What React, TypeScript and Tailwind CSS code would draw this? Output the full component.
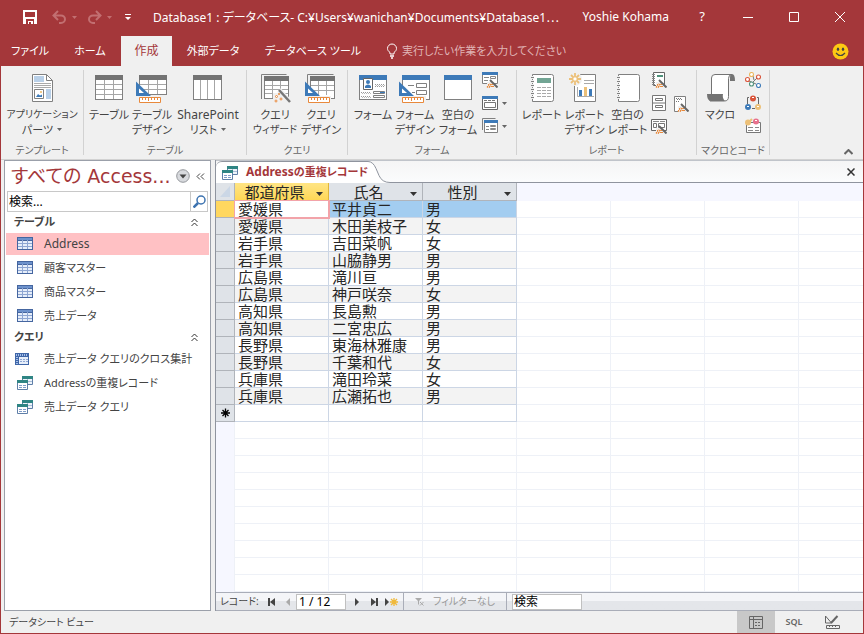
import type { ReactNode } from 'react'

interface Person {
  pref: string
  name: string
  sex: string
}

const PEOPLE: Person[] = [
  { pref: '愛媛県', name: '平井貞二', sex: '男' },
  { pref: '愛媛県', name: '木田美枝子', sex: '女' },
  { pref: '岩手県', name: '吉田菜帆', sex: '女' },
  { pref: '岩手県', name: '山脇静男', sex: '男' },
  { pref: '広島県', name: '滝川亘', sex: '男' },
  { pref: '広島県', name: '神戸咲奈', sex: '女' },
  { pref: '高知県', name: '長島勲', sex: '男' },
  { pref: '高知県', name: '二宮忠広', sex: '男' },
  { pref: '長野県', name: '東海林雅康', sex: '男' },
  { pref: '長野県', name: '千葉和代', sex: '女' },
  { pref: '兵庫県', name: '滝田玲菜', sex: '女' },
  { pref: '兵庫県', name: '広瀬拓也', sex: '男' },
]

const COLUMNS = ['都道府県', '氏名', '性別']

export default function App() {
  return (
    <div className="flex h-screen flex-col overflow-hidden border-x border-b border-[#a4373a] bg-[#f0f0f0] font-['Noto_Sans','Noto_Sans_CJK_JP',sans-serif] text-[11px] text-[#444] [font-feature-settings:'palt']">
      <TitleBar />
      <RibbonTabs />
      <Ribbon />
      <div className="flex min-h-0 flex-1">
        <NavPane />
        <Document />
      </div>
      <StatusBar />
    </div>
  )
}

function TitleBar() {
  return (
    <header className="flex h-9 shrink-0 items-center bg-[#a4373a] pb-[2px] text-xs text-white">
      <button type="button" aria-label="上書き保存" className="ml-[22px]">
        <svg width="14" height="14" shapeRendering="crispEdges">
          <path d="M0 0h14v14H0z" fill="#fff" />
          <path d="M2 2h10v5H2zM3 9h8v5H3z" fill="#a4373a" />
          <path d="M5 11h2v3H5z" fill="#fff" />
          <path d="M7 11h3v3H7z" fill="#fff" />
          <path d="M6 12h2v2H6z" fill="#a4373a" />
        </svg>
      </button>
      <button type="button" aria-label="元に戻す" className="ml-[15px] flex items-center gap-[5px]">
        <svg width="15" height="14" fill="none" stroke="#c26f71" strokeWidth="2">
          <path d="M6 1L1.500 5.500L6 10M2 5.500h7a4 3.700 0 0 1 0 7.400H7" />
        </svg>
        <Caret className="text-[#c26f71]" />
      </button>
      <button type="button" aria-label="やり直し" className="ml-[10px] flex items-center gap-[5px]">
        <svg width="15" height="14" fill="none" stroke="#c26f71" strokeWidth="2">
          <path d="M9 1l4.500 4.500L9 10M13 5.500H6a4 3.700 0 0 0 0 7.400h2" />
        </svg>
        <Caret className="text-[#c26f71]" />
      </button>
      <button type="button" aria-label="クイック アクセス" className="ml-[13px]">
        <svg width="6" height="7" fill="#fff">
          <path d="M0 0h6v1H0zM0 3h6L3 6z" />
        </svg>
      </button>
      <h1 className="ml-[22px] min-w-0 flex-1 overflow-hidden whitespace-nowrap">
        Database1 : データベース- C:¥Users¥wanichan¥Documents¥Database1
        <span className="font-['Noto_Sans_CJK_JP'] [font-feature-settings:normal]">⋯</span>
      </h1>
      <span className="mr-[10px]">Yoshie Kohama</span>
      <button type="button" className="w-[46px] text-[13px]">?</button>
      <button type="button" aria-label="最小化" className="flex w-[46px] justify-center">
        <svg width="10" height="10"><path d="M0 5h10v1H0z" fill="#fff" /></svg>
      </button>
      <button type="button" aria-label="最大化" className="flex w-[46px] justify-center">
        <svg width="10" height="10"><path d="M.5.5h9v9h-9z" fill="none" stroke="#fff" /></svg>
      </button>
      <button type="button" aria-label="閉じる" className="flex w-[46px] justify-center">
        <svg width="10" height="10"><path d="M0 0l10 10M10 0L0 10" stroke="#fff" /></svg>
      </button>
    </header>
  )
}

function RibbonTabs() {
  return (
    <nav className="flex h-[30px] shrink-0 items-stretch bg-[#a4373a] text-white">
      <button type="button" className="w-[58px]">ファイル</button>
      <button type="button" className="w-[62px]">ホーム</button>
      <button type="button" className="w-[51px] bg-[#f0f0f0] text-xs text-[#a4373a]">作成</button>
      <button type="button" className="w-[82px]">外部データ</button>
      <button type="button" className="w-[118px]">データベース ツール</button>
      <label className="ml-[14px] flex flex-1 items-center gap-1">
        <svg width="12" height="16" fill="none" stroke="#fff" aria-hidden="true">
          <path d="M4 11V9.500C2.500 8.500 1.500 7 1.500 5.500a4.500 4.500 0 0 1 9 0C10.500 7 9.500 8.500 8 9.500V11z" />
          <path d="M4 13h4M5 15h2" strokeWidth="1.500" />
        </svg>
        <input
          type="text"
          aria-label="操作アシスト"
          placeholder="実行したい作業を入力してください"
          className="w-[200px] bg-transparent text-[11px] outline-none placeholder:text-[#e0b4b5]"
        />
      </label>
      <button type="button" aria-label="フィードバック" className="mr-[14px] self-center">
        <svg width="17" height="17">
          <circle cx="8.500" cy="8.500" r="8" fill="#fdc913" />
          <ellipse cx="6" cy="6.300" rx="1.200" ry="1.700" fill="#444" />
          <ellipse cx="11" cy="6.300" rx="1.200" ry="1.700" fill="#444" />
          <path d="M4 10q4.500 5 9 0" fill="none" stroke="#444" strokeWidth="1.200" />
        </svg>
      </button>
    </nav>
  )
}

function Ribbon() {
  return (
    <div className="flex h-[94px] shrink-0 border-b border-[#d2d2d2] pt-1 pb-1">
      <RibbonGroup label="テンプレート" className="w-[83px]">
        <BigButton icon={<AppPartsIcon />} lines={['アプリケーション', 'パーツ']} caret className="w-[76px]" />
      </RibbonGroup>
      <RibbonGroup label="テーブル" className="w-[163px]">
        <BigButton icon={<TableIcon />} lines={['テーブル']} className="w-[42px]" />
        <BigButton icon={<TableDesignIcon />} lines={['テーブル', 'デザイン']} className="w-[44px]" />
        <BigButton icon={<SharePointIcon />} lines={['SharePoint', 'リスト']} caret className="w-[68px]" />
      </RibbonGroup>
      <RibbonGroup label="クエリ" className="w-[101px]">
        <BigButton icon={<QueryWizardIcon />} lines={['クエリ', 'ウィザード']} className="w-[48px]" />
        <BigButton icon={<QueryDesignIcon />} lines={['クエリ', 'デザイン']} className="w-[44px]" />
      </RibbonGroup>
      <RibbonGroup label="フォーム" className="w-[169px]">
        <BigButton icon={<FormIcon />} lines={['フォーム']} className="w-[42px]" />
        <BigButton icon={<FormDesignIcon />} lines={['フォーム', 'デザイン']} className="w-[42px]" />
        <BigButton icon={<BlankFormIcon />} lines={['空白の', 'フォーム']} className="w-[44px]" />
        <SmallColumn className="w-[32px] pl-[2px]">
          <SmallButton name="フォーム ウィザード" icon={<FormWizardIcon />} />
          <SmallButton name="ナビゲーション" icon={<NavFormIcon />} caret />
          <SmallButton name="その他のフォーム" icon={<MoreFormsIcon />} caret />
        </SmallColumn>
      </RibbonGroup>
      <RibbonGroup label="レポート" className="w-[180px]">
        <BigButton icon={<ReportIcon />} lines={['レポート']} className="w-[42px]" />
        <BigButton icon={<ReportDesignIcon />} lines={['レポート', 'デザイン']} className="w-[44px]" />
        <BigButton icon={<BlankReportIcon />} lines={['空白の', 'レポート']} className="w-[42px]" />
        <SmallColumn className="w-[24px] pl-[2px]">
          <SmallButton name="レポート ウィザード" icon={<ReportWizardIcon />} />
          <SmallButton name="宛名ラベル" icon={<LabelsIcon />} />
          <SmallButton name="伝票ウィザード" icon={<SlipWizardIcon />} />
        </SmallColumn>
        <SmallColumn className="w-[20px] justify-center">
          <SmallButton name="はがきウィザード" icon={<PostcardIcon />} />
        </SmallColumn>
      </RibbonGroup>
      <RibbonGroup label="マクロとコード" className="w-[73px]">
        <BigButton icon={<MacroIcon />} lines={['マクロ']} className="w-[42px]" />
        <SmallColumn className="w-[26px] pl-[4px]">
          <SmallButton name="標準モジュール" icon={<ModuleIcon />} />
          <SmallButton name="クラス モジュール" icon={<ClassModuleIcon />} />
          <SmallButton name="Visual Basic" icon={<VisualBasicIcon />} />
        </SmallColumn>
      </RibbonGroup>
      <button type="button" aria-label="リボンを折りたたむ" className="mr-[10px] ml-auto self-end">
        <svg width="9" height="6" fill="none" stroke="#666" strokeWidth="2"><path d="M.5 5l4-4 4 4" /></svg>
      </button>
    </div>
  )
}

function RibbonGroup({ label, className, children }: { label: string; className: string; children: ReactNode }) {
  return (
    <section className={`flex shrink-0 flex-col border-r border-[#d2d2d2] ${className}`}>
      <div className="flex h-[72px] shrink-0 justify-center">{children}</div>
      <div className="text-center text-[10px] leading-4 whitespace-nowrap text-[#666]">{label}</div>
    </section>
  )
}

interface BigButtonProps {
  icon: ReactNode
  lines: string[]
  caret?: boolean
  className: string
}

function BigButton({ icon, lines, caret, className }: BigButtonProps) {
  return (
    <button type="button" className={`flex shrink-0 flex-col items-center pt-[3px] ${className}`}>
      {icon}
      <span className="mt-1 flex flex-col items-center leading-[15px] whitespace-nowrap">
        {lines.map((line, i) => (
          <span key={line} className={`flex items-center gap-1 ${lineSize(line)}`}>
            {line}
            {caret && i === lines.length - 1 && <Caret />}
          </span>
        ))}
      </span>
    </button>
  )
}

// long kana labels drop a size so they stay inside their button
function lineSize(line: string) {
  if (/^[A-Za-z]/.test(line)) return 'text-xs leading-[15px]'
  return line.length > 4 ? 'text-[10px]' : 'text-[11px]'
}

function SmallColumn({ className, children }: { className: string; children: ReactNode }) {
  return <div className={`flex h-[66px] shrink-0 flex-col gap-[7px] pt-[2px] ${className}`}>{children}</div>
}

function SmallButton({ name, icon, caret }: { name: string; icon: ReactNode; caret?: boolean }) {
  return (
    <button type="button" aria-label={name} className="flex items-center gap-1">
      {icon}
      {caret && <Caret />}
    </button>
  )
}

function Caret({ className = 'text-[#666]' }: { className?: string }) {
  return (
    <svg width="5" height="3" className={`shrink-0 ${className}`} fill="currentColor" aria-hidden="true">
      <path d="M0 0h5L2.500 3z" />
    </svg>
  )
}

/* ---- large ribbon icons ---- */

function Big({ children }: { children: ReactNode }) {
  return <svg width="32" height="30" viewBox="0 0 32 30" className="shrink-0" aria-hidden="true">{children}</svg>
}

function Sheet({ x, y, w, h, head = '#737373' }: { x: number; y: number; w: number; h: number; head?: string }) {
  return (
    <g shapeRendering="crispEdges">
      <rect x={x} y={y} width={w} height={h} fill="#808080" />
      <rect x={x + 1} y={y + 1} width={w - 2} height={h - 2} fill="#fff" />
      <rect x={x} y={y} width={w} height={5} fill={head} />
    </g>
  )
}

function SetSquare() {
  return (
    <g>
      <path d="M0 8.500V23h15z" fill="#3d7ab8" />
      <path d="M3 15.500V20h5z" fill="#fff" />
      <path d="M3.500 24.500h21v5h-21z" fill="#fff" stroke="#e8893c" />
      <path d="M6.500 25v2M9.500 25v2M12.500 25v3M15.500 25v2M18.500 25v2M21.500 25v2" stroke="#e8893c" />
    </g>
  )
}

function AppPartsIcon() {
  return (
    <Big>
      <path d="M6.500 1.500h14l6 6v21h-20z" fill="#fff" stroke="#808080" />
      <path d="M20.500 1.500v6h6" fill="none" stroke="#808080" />
      <path d="M8 3h10v6H8zM20 16h5v10h-5z" fill="#b9d0e8" />
      <path d="M8 10.500h17M8 12.500h17M8 14.500h17" stroke="#aaa" />
      <path d="M8.500 16.500h9v9h-9z" fill="#fff" stroke="#808080" />
      <path d="M10 24l2-3 2 1.500 2-1v2.500z" fill="#3d7ab8" />
      <circle cx="15" cy="19" r="1" fill="#ecb75f" />
    </Big>
  )
}

function TableIcon() {
  return (
    <Big>
      <Sheet x={2} y={2} w={28} h={25} />
      <path d="M3 11.500h26M3 16.500h26M3 21.500h26M11.500 7v19M20.500 7v19" stroke="#a6a6a6" />
    </Big>
  )
}

function TableDesignIcon() {
  return (
    <Big>
      <Sheet x={3} y={2} w={28} h={20} />
      <path d="M4 11.500h26M4 16.500h26M12.500 7v14M21.500 7v14" stroke="#a6a6a6" />
      <SetSquare />
    </Big>
  )
}

function SharePointIcon() {
  return (
    <Big>
      <Sheet x={1} y={2} w={29} h={25} />
      <path d="M8.500 7v19M15.500 7v19M22.500 7v19" stroke="#a6a6a6" />
    </Big>
  )
}

function QueryWizardIcon() {
  return (
    <Big>
      <path d="M2.500 26V1.500h25" fill="none" stroke="#808080" />
      <Sheet x={5} y={3} w={25} h={23} />
      <path d="M6 12.500h23M6 16.500h23M6 20.500h23M13.500 8v17M21.500 8v17" stroke="#a6a6a6" />
      <path d="M14 20h9l9 10H14z" fill="#f0f0f0" />
      <path d="M20 17l11 12" stroke="#f0f0f0" strokeWidth="5" />
      <path d="M20 17l11 12" stroke="#777" strokeWidth="2.500" />
      <g fill="#fff" stroke="#e8893c">
        <circle cx="17.500" cy="23.500" r="1" />
        <circle cx="22" cy="26" r="1" />
        <circle cx="17" cy="28" r="1" />
        <circle cx="20" cy="21" r=".7" />
      </g>
    </Big>
  )
}

function QueryDesignIcon() {
  return (
    <Big>
      <path d="M2.500 20V1.500h26" fill="none" stroke="#808080" />
      <Sheet x={5} y={3} w={25} h={23} />
      <path d="M6 12.500h23M6 17.500h23M13.500 8v14M21.500 8v14" stroke="#a6a6a6" />
      <path d="M0 23h26v7H0z" fill="#f0f0f0" />
      <SetSquare />
    </Big>
  )
}

function FormIcon() {
  return (
    <Big>
      <Sheet x={2} y={2} w={28} h={25} head="#3d7ab8" />
      <path d="M6.500 5.500h9v11h-9z" fill="#fff" stroke="#666" />
      <circle cx="11" cy="9" r="2" fill="#3d7ab8" />
      <path d="M8 15v-2q3-3 6 0v2z" fill="#3d7ab8" />
      <path d="M18 11.500h10M18 13.500h10M4 19.500h10M4 23.500h10" stroke="#999" strokeDasharray="1 1" />
      <path d="M19 12.500h9M5 20.500h9M5 24.500h9" stroke="#bbb" strokeDasharray="1 1" />
      <path d="M16.500 18.500h11v2h-11zM16.500 22.500h11v2h-11z" fill="#fff" stroke="#808080" />
      <path d="M23 19h5v1h-5z" fill="#3d7ab8" />
    </Big>
  )
}

function FormDesignIcon() {
  return (
    <Big>
      <Sheet x={3} y={2} w={28} h={25} head="#3d7ab8" />
      <path d="M9 12.500h6M13 19.500h3" stroke="#808080" />
      <path d="M17.500 10.500h10v4h-10zM17.500 17.500h10v4h-10z" fill="#fff" stroke="#808080" />
      <path d="M0 23h27v7H0z" fill="#f0f0f0" />
      <SetSquare />
    </Big>
  )
}

function BlankFormIcon() {
  return <Big><Sheet x={2} y={2} w={28} h={25} head="#3d7ab8" /></Big>
}

function Notebook() {
  return (
    <g>
      <path d="M6.500 1.500h19q2 0 2 2v23q0 2-2 2h-19z" fill="#fff" stroke="#808080" />
      <path d="M5 4.500h3M5 8.500h3M5 12.500h3M5 16.500h3M5 20.500h3M5 24.500h3" stroke="#f0f0f0" strokeWidth="3" />
      <path d="M5 4.500h3M5 8.500h3M5 12.500h3M5 16.500h3M5 20.500h3M5 24.500h3" stroke="#808080" />
    </g>
  )
}

function ReportIcon() {
  return (
    <Big>
      <Notebook />
      <path d="M11 5h14v5H11z" fill="#72a594" />
      <path d="M11 14.500h14M11 17.500h14M11 20.500h14M11 23.500h14" stroke="#aaa" strokeDasharray="4 1" />
    </Big>
  )
}

function BlankReportIcon() {
  return <Big><Notebook /></Big>
}

function ReportDesignIcon() {
  return (
    <Big>
      <path d="M5.500 1.500h21v27h-21z" fill="#fff" stroke="#808080" />
      <path d="M15 7.500h10M15 10.500h10" stroke="#aaa" />
      <path d="M8.500 14v9.500H25" fill="none" stroke="#aaa" />
      <path d="M10 17h3v6h-3zM20 16h3v7h-3z" fill="#3d7ab8" />
      <path d="M15 14h3v9h-3z" fill="#ecc078" />
      <circle cx="6" cy="6" r="7" fill="#f0f0f0" />
      <path d="M6 0v12M0 6h12M2 2l8 8M10 2l-8 8" stroke="#ecc078" strokeWidth="1.800" />
      <circle cx="6" cy="6" r="2.200" fill="#fff" stroke="#ecc078" />
    </Big>
  )
}

function MacroIcon() {
  return (
    <Big>
      <path d="M11 1.500h17q-3.500 0-3.500 4v18q0 4.500-4 4.500H6V22h1.500V5q0-3.500 3.500-3.500z" fill="#fff" stroke="#737373" />
      <path d="M28 1q3 0 3 7h-5V5q0-4 2-4zM3 21h16q-1 4 2 7H7q-4 0-4-7z" fill="#737373" />
    </Big>
  )
}

/* ---- small ribbon icons ---- */

function Small({ children }: { children: ReactNode }) {
  return <svg width="16" height="16" viewBox="0 0 16 16" className="shrink-0" aria-hidden="true">{children}</svg>
}

function Wand() {
  return (
    <g>
      <path d="M5 10h5l6 6H5z" fill="#f0f0f0" />
      <path d="M8 8l7.500 7.500" stroke="#666" strokeWidth="2" />
      <g stroke="#e8893c" strokeWidth="1.200" strokeDasharray="1 1">
        <path d="M5 15.500l4-4.500M7 16l3-4M10.500 12v4M6 12.500h6M5 14.500h7" />
      </g>
    </g>
  )
}

function FormWizardIcon() {
  return (
    <Small>
      <path d="M.5.500h15v11H.500z" fill="#fff" stroke="#808080" />
      <path d="M0 0h16v3H0z" fill="#3d7ab8" />
      <path d="M2 5.500h5M2 8.500h4" stroke="#888" />
      <path d="M8.500 4.500h5v2h-5z" fill="none" stroke="#888" />
      <Wand />
    </Small>
  )
}

function NavFormIcon() {
  return (
    <Small>
      <path d="M.5 1.500h15v13H.5z" fill="#fff" stroke="#666" />
      <path d="M0 1h16v3H0z" fill="#3d7ab8" />
      <path d="M2 5.500h12" stroke="#777" strokeDasharray="3 1" />
      <path d="M2.500 7.500h11v5h-11z" fill="#fff" stroke="#777" />
    </Small>
  )
}

function MoreFormsIcon() {
  return (
    <Small>
      <path d="M.5 12V.500h13" fill="none" stroke="#808080" />
      <path d="M2.500 2.500h13v12h-13z" fill="#fff" stroke="#808080" />
      <path d="M2 2h14v3H2z" fill="#3d7ab8" />
      <path d="M4 8.500h3M4 11.500h3" stroke="#888" />
      <path d="M8.500 7.500h5v1h-5zM8.500 10.500h5v1h-5z" fill="none" stroke="#888" />
    </Small>
  )
}

function ReportWizardIcon() {
  return (
    <Small>
      <path d="M2.500.5h11v13h-11z" fill="#fff" stroke="#666" />
      <path d="M1 2.500h3M1 4.500h3M1 6.500h3M1 8.500h3M1 10.500h3M1 12.500h3" stroke="#888" />
      <path d="M6 3h6v2H6z" fill="#4f927b" />
      <Wand />
    </Small>
  )
}

function LabelsIcon() {
  return (
    <Small>
      <path d="M1.500.5h13v15h-13z" fill="#fff" stroke="#777" />
      <path d="M4.500 3.500h7v2h-7zM4.500 10.500h7v2h-7zM2 8h12" fill="none" stroke="#777" />
    </Small>
  )
}

function SlipWizardIcon() {
  return (
    <Small>
      <path d="M.5 1.500h15v11H.5z" fill="#fff" stroke="#666" />
      <path d="M2 3.500h6M9 3.500h5" stroke="#888" />
      <path d="M2.500 5.500h3v4h-3zM7.500 5.500h6v4h-6z" fill="none" stroke="#777" />
      <Wand />
    </Small>
  )
}

function PostcardIcon() {
  return (
    <Small>
      <path d="M1.500.5h11v15h-11z" fill="#fff" stroke="#808080" />
      <path d="M3 2.500h6M4 3.500h5M3 5.500h3" stroke="#777" strokeDasharray="1 1" />
      <Wand />
    </Small>
  )
}

function Ball({ cx, cy, color }: { cx: number; cy: number; color: string }) {
  return <circle cx={cx} cy={cy} r="2" fill="#fff" stroke={color} strokeWidth="1.100" />
}

function ModuleIcon() {
  return (
    <Small>
      <path d="M4 9l7 3M8 4l1 4M12 6l-4 4" stroke="#777" />
      <Ball cx={2.500} cy={7.500} color="#d9543a" />
      <Ball cx={6.500} cy={2.500} color="#ecb75f" />
      <Ball cx={13.500} cy={5} color="#d9543a" />
      <Ball cx={6.500} cy={12} color="#4f927b" />
      <Ball cx={13.500} cy={13.500} color="#3d7ab8" />
    </Small>
  )
}

function ClassModuleIcon() {
  return (
    <Small>
      <path d="M4 2.500H2.500V9M12 2.500h1.500V9M7 13.500h3" fill="none" stroke="#666" />
      <circle cx="8" cy="3.500" r="3" fill="#d9543a" />
      <circle cx="3" cy="12" r="3" fill="#3d7ab8" />
      <circle cx="13" cy="12" r="3" fill="#ecc078" />
      <path d="M7 2h2v1H7zM2 11h2v1H2zM12 11h2v1h-2z" fill="#fff" />
    </Small>
  )
}

function VisualBasicIcon() {
  return (
    <Small>
      <path d="M1.500 4.500h14v10h-14z" fill="#fff" stroke="#777" />
      <path d="M3 9.500h5M10 9.500h4M3 12.500h5M10 12.500h4" stroke="#888" />
      <circle cx="3" cy="4.500" r="3" fill="#ecc078" />
      <circle cx="11" cy="3.500" r="3" fill="#e8718d" />
      <path d="M4 4l3-3" stroke="#ecc078" strokeWidth="2" />
      <path d="M10 2h2v1h-2z" fill="#fff" />
    </Small>
  )
}

/* ---- navigation pane ---- */

function NavPane() {
  return (
    <aside className="ml-[3px] flex w-[212px] shrink-0 border-r border-[#8f949e]">
      <div className="min-w-0 flex-1 border border-[#9ba0aa] bg-white px-px">
        <div className="flex h-[30px] items-center pl-[5px]">
          <h2 className="min-w-0 flex-1 font-['DejaVu_Sans','Noto_Sans_CJK_JP',sans-serif] text-[19px] leading-[30px] whitespace-nowrap text-[#a4373a]">
            すべての Access...
          </h2>
          <button type="button" aria-label="カテゴリの選択" className="mr-[6px] shrink-0">
            <svg width="14" height="14">
              <circle cx="7" cy="7" r="6.300" fill="#d8dade" stroke="#94979c" />
              <path d="M3.500 5.500h7L7 9.500z" fill="#444" />
            </svg>
          </button>
          <button type="button" aria-label="閉じる" className="mr-[4px] shrink-0">
            <svg width="9" height="7" fill="none" stroke="#444"><path d="M4 .5l-3 3 3 3M8 .5l-3 3 3 3" /></svg>
          </button>
        </div>
        <div className="mx-px flex h-[21px] border border-[#c8c8c8]">
          <input type="text" aria-label="オブジェクトの検索" defaultValue="検索..." className="min-w-0 flex-1 pl-px text-xs text-black outline-none" />
          <button type="button" aria-label="検索" className="flex w-[17px] items-center justify-center border-l border-[#c8c8c8]">
            <svg width="13" height="13" fill="none" stroke="#3d73b0">
              <circle cx="8" cy="5" r="4" strokeWidth="1.500" />
              <path d="M5 8l-4.500 4.500" strokeWidth="2.500" />
            </svg>
          </button>
        </div>
        <NavHeading>テーブル</NavHeading>
        <ul className="flex flex-col gap-[2px]">
          <NavItem icon={<NavTableIcon />} selected>Address</NavItem>
          <NavItem icon={<NavTableIcon />}>顧客マスター</NavItem>
          <NavItem icon={<NavTableIcon />}>商品マスター</NavItem>
          <NavItem icon={<NavTableIcon />}>売上データ</NavItem>
        </ul>
        <NavHeading>クエリ</NavHeading>
        <ul className="flex flex-col gap-[2px]">
          <NavItem icon={<CrosstabIcon />}>売上データ クエリのクロス集計</NavItem>
          <NavItem icon={<QueryIcon />}>Addressの重複レコード</NavItem>
          <NavItem icon={<QueryIcon />}>売上データ クエリ</NavItem>
        </ul>
      </div>
      <div className="w-1 shrink-0 bg-[#f0f0f0]" />
    </aside>
  )
}

function NavHeading({ children }: { children: string }) {
  return (
    <button type="button" className="flex h-[21px] w-full items-center justify-between pr-[11px] pl-[8px] text-[11px] font-bold">
      {children}
      <svg width="7" height="9" fill="none" stroke="#333"><path d="M.5 4l3-3 3 3M.5 8l3-3 3 3" /></svg>
    </button>
  )
}

function NavItem({ icon, selected, children }: { icon: ReactNode; selected?: boolean; children: string }) {
  return (
    <li>
      <button
        type="button"
        className={`flex h-[22px] w-full items-center gap-[11px] pl-[11px] whitespace-nowrap ${
          selected ? 'bg-[#ffc1c4] text-xs' : 'text-[11px]'
        }`}
      >
        {icon}
        {children}
      </button>
    </li>
  )
}

function NavTableIcon() {
  return (
    <Small>
      <path d="M0 1h16v13H0z" fill="#4566a0" />
      <path d="M1 5h14v8H1z" fill="#e6eefa" />
      <path d="M1 2h14v2H1z" fill="#6d92cc" />
      <path d="M1 7.500h14M1 10.500h14M5.500 4v9M10.500 4v9" stroke="#8ea6d2" />
    </Small>
  )
}

function CrosstabIcon() {
  return (
    <svg width="16" height="16" className="mr-[2px] -ml-[2px] shrink-0" aria-hidden="true">
      <path d="M0 2h14v12H0z" fill="#3f66a8" />
      <path d="M4 6h9v7H4z" fill="#e6eefa" />
      <path d="M1 4h12M2 6v7" stroke="#a6c0ea" strokeWidth="2" strokeDasharray="1 1" />
      <path d="M5 8.500h8M5 10.500h8" stroke="#8ea6d2" strokeDasharray="2 1" />
    </svg>
  )
}

function QueryIcon() {
  return (
    <Small>
      <path d="M5.500 1.500h10v8h-10z" fill="#eef4fa" stroke="#5f7fa8" />
      <path d="M5 1h11v3H5z" fill="#2f8584" />
      <path d="M10.500 4v5M6 6.500h9" stroke="#a9bdd8" />
      <path d="M.5 5.500h10v9H.5z" fill="#fff" stroke="#5f7fa8" />
      <path d="M0 5h11v3H0z" fill="#2f8584" />
      <path d="M2 10.500h3M6 10.500h3M2 12.500h3M6 12.500h3" stroke="#7f9cc8" />
    </Small>
  )
}

/* ---- datasheet ---- */

function Document() {
  return (
    <main className="flex min-w-0 flex-1 flex-col border-t border-[#c0c4ca]">
      <div className="flex h-[22px] shrink-0 items-stretch bg-linear-to-b from-[#f5f5f5] to-[#fbfcfd]">
        <div className="flex items-center gap-2 rounded-tl-md border-t border-[#8f949e] bg-white pl-[6px]">
          <QueryIcon />
          <span className="text-[11px] font-bold whitespace-nowrap text-[#a4373a]">
            <span className="text-xs">Address</span>の重複レコード
          </span>
        </div>
        <svg width="22" height="22" className="shrink-0" aria-hidden="true">
          <path d="M0 .5q5 0 8 7l3 7q3 7 11 7H0z" fill="#fff" />
          <path d="M0 .5q5 0 8 7l3 7q3 7 11 7" fill="none" stroke="#8f949e" />
        </svg>
        <div className="flex flex-1 items-center justify-end border-b border-[#8f949e] pr-[8px]">
          <button type="button" aria-label="タブを閉じる">
            <svg width="8" height="8" stroke="#333" strokeWidth="1.500"><path d="M.5.5l7 7M7.500.5l-7 7" /></svg>
          </button>
        </div>
      </div>
      <div className="flex min-h-0 flex-1 flex-col bg-white bg-[linear-gradient(to_right,transparent_93px,#eef1f7_93px),linear-gradient(to_bottom,transparent_16px,#eef1f7_16px)] bg-[size:94px_17px] bg-[position:19px_18px] font-['Noto_Sans_CJK_JP',sans-serif]">
        <table className="w-full table-fixed border-separate border-spacing-0 text-[15px] leading-4 text-[#262626] [font-feature-settings:normal]">
          <thead>
            <tr>
              <th className="h-[18px] w-[19px] border-r border-b border-[#b0b4ba] bg-[#dfe3e8] p-0">
                <svg width="18" height="17" className="block" aria-hidden="true"><path d="M14 3v11H4z" fill="#cbd7e6" /></svg>
              </th>
              {COLUMNS.map((col, i) => (
                <th
                  key={col}
                  className={`h-[18px] w-[94px] border-r border-b p-0 font-normal ${
                    i === 0
                      ? 'border-[#e0b63c] bg-linear-to-b from-[#ffe584] to-[#ffd755]'
                      : 'border-[#b0b4ba] bg-[#dfe3e8]'
                  }`}
                >
                  <div className="flex h-[17px] items-center">
                    <span className="flex-1 text-center">{col}</span>
                    <button type="button" aria-label={`${col}のフィルター`} className="mr-[3px] flex h-full items-end px-[2px] pb-1">
                      <svg width="7" height="4"><path d="M0 0h7L3.500 4z" fill="#333" /></svg>
                    </button>
                  </div>
                </th>
              ))}
              <th className="bg-[#f6f7ff] p-0" />
            </tr>
          </thead>
          <tbody>
            {PEOPLE.map((p, i) => (
              <PersonRow key={p.name} person={p} current={i === 0} shaded={i % 2 === 1} />
            ))}
            <tr>
              <td className="h-[17px] border-r border-b border-[#b0b4ba] bg-[#dfe3e8] p-0">
                <svg width="18" height="16" className="block" stroke="#000" strokeWidth="1.300" aria-hidden="true">
                  <path d="M9.500 3.500v9M5 8h9M6.500 5l6 6M12.500 5l-6 6" />
                </svg>
              </td>
              <td className="border-r border-b border-[#ccd6e5] bg-white p-0" />
              <td className="border-r border-b border-[#ccd6e5] bg-white p-0" />
              <td className="border-r border-b border-[#ccd6e5] bg-white p-0" />
              <td className="p-0" />
            </tr>
          </tbody>
        </table>
        <div className="w-[19px] flex-1 border-r border-[#eef1f7] bg-[#f6f7ff]" />
      </div>
      <RecordBar />
    </main>
  )
}

function PersonRow({ person, current, shaded }: { person: Person; current: boolean; shaded: boolean }) {
  const bg = current ? 'bg-[#a3cdf0]' : shaded ? 'bg-[#f3f3f3]' : 'bg-white'
  const cell = `border-r border-b border-[#ccd6e5] py-0 pr-0 pl-[3px] whitespace-nowrap ${bg}`
  return (
    <tr>
      <td className={`h-[17px] border-r border-b border-[#b0b4ba] p-0 ${current ? 'bg-[#ffd75f]' : 'bg-[#dfe3e8]'}`} />
      {current ? (
        <td className="border-r border-b border-[#f2a3a9] bg-white py-0 pr-0 pl-[3px] outline-1 outline-[#f2a3a9]">
          {person.pref}
        </td>
      ) : (
        <td className={cell}>{person.pref}</td>
      )}
      <td className={cell}>{person.name}</td>
      <td className={cell}>{person.sex}</td>
      <td className="p-0" />
    </tr>
  )
}

function RecordBar() {
  return (
    <div className="flex h-[19px] shrink-0 items-center border-y border-[#a9adb8] bg-linear-to-b from-[#f4f5f8] from-50% to-[#e4e6ea] to-50% pl-1">
      <label htmlFor="record" className="w-[48px] text-[10px] whitespace-nowrap">レコード:</label>
      <button type="button" aria-label="先頭" className="w-[8px]">
        <svg width="7" height="8" fill="#444"><path d="M0 0h2v8H0zM7 0v8L2 4z" /></svg>
      </button>
      <button type="button" aria-label="前へ" className="ml-[10px] w-[10px]">
        <svg width="4" height="8" fill="#aaa"><path d="M4 0v8L0 4z" /></svg>
      </button>
      <input id="record" type="text" defaultValue="1 / 12" className="h-4 w-[50px] border border-[#c0c0c0] bg-white px-[2px] text-xs text-black outline-none" />
      <button type="button" aria-label="次へ" className="ml-[9px] w-[16px]">
        <svg width="4" height="8" fill="#444"><path d="M0 0v8l4-4z" /></svg>
      </button>
      <button type="button" aria-label="最後" className="w-[14px]">
        <svg width="7" height="8" fill="#444"><path d="M5 0h2v8H5zM0 0v8l5-4z" /></svg>
      </button>
      <button type="button" aria-label="新しいレコード" className="w-[18px]">
        <svg width="13" height="8">
          <path d="M0 0v8l4-4z" fill="#444" />
          <path d="M9 0v8M5 4h8M6 1l6 6M12 1L6 7" stroke="#f0b93a" strokeWidth="1.300" />
        </svg>
      </button>
      <button type="button" className="flex h-full w-[104px] items-center gap-[9px] border-x border-[#a9adb8] pl-[11px] text-[10px] whitespace-nowrap text-[#999]">
        <svg width="9" height="9" fill="#aaa">
          <path d="M0 1h7L4 4v4L3 7V4z" />
          <path d="M5 5l3.500 3.500M8.500 5L5 8.500" stroke="#aaa" />
        </svg>
        フィルターなし
      </button>
      <input type="text" aria-label="レコードの検索" defaultValue="検索" className="ml-[5px] h-4 w-[70px] border border-[#c0c0c0] bg-white px-px text-xs text-black outline-none" />
    </div>
  )
}

function StatusBar() {
  return (
    <footer className="flex h-[22px] shrink-0 items-stretch">
      <span className="flex-1 self-center pl-[8px] text-[10px]">データシート ビュー</span>
      <button type="button" aria-label="データシート ビュー" className="flex w-[38px] items-center justify-center bg-[#c8c8c8]">
        <svg width="14" height="13" fill="none" stroke="#666">
          <path d="M.5.5h13v12H.5zM1 3.500h12M4.500 1v11" />
          <path d="M6 6.500h6M6 9.500h6" strokeDasharray="2 1" />
        </svg>
      </button>
      <button type="button" className="w-[38px] text-[9px] font-semibold text-[#666]">SQL</button>
      <button type="button" aria-label="デザイン ビュー" className="mr-[12px] flex w-[38px] items-center justify-center">
        <svg width="15" height="14" fill="none" stroke="#666">
          <path d="M.5 1v7h6zM1.500 10.500h13v3h-13z" />
          <path d="M12.500 1L6 8" strokeWidth="2" />
          <path d="M4.500 11v1M7.500 11v1M10.500 11v1" />
        </svg>
      </button>
    </footer>
  )
}
